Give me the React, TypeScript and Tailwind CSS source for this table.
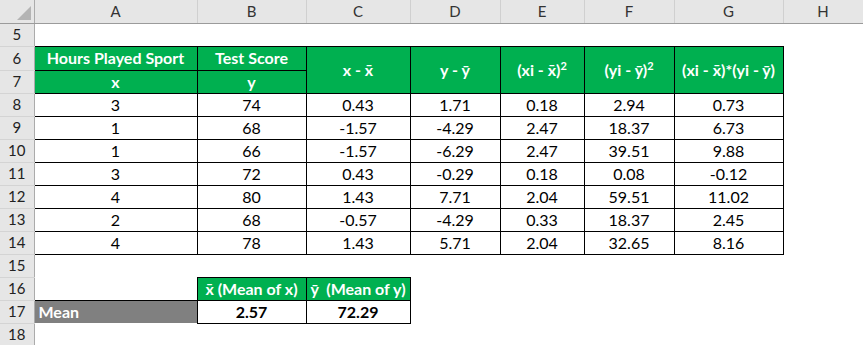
import React from "react";

const F = "font-['Lato','Liberation_Sans',sans-serif]";

const rowHead =
  "bg-[#e6e6e6] border-r border-r-[#ababab] border-b border-b-[#d4d4d4] text-center text-[15px] text-[#222] font-normal p-0";
const colHead =
  "bg-[#e6e6e6] border-b border-b-[#9b9b9b] border-r border-r-[#d0d0d0] text-center text-[15px] text-[#333] font-normal p-0";
const green =
  "bg-[#00b050] border border-black text-white font-bold text-center text-[16px] p-0 whitespace-nowrap";
const data = "border border-black text-center text-[16px] text-black p-0";
const blank = "p-0";

const rows: string[][] = [
  ["3", "74", "0.43", "1.71", "0.18", "2.94", "0.73"],
  ["1", "68", "-1.57", "-4.29", "2.47", "18.37", "6.73"],
  ["1", "66", "-1.57", "-6.29", "2.47", "39.51", "9.88"],
  ["3", "72", "0.43", "-0.29", "0.18", "0.08", "-0.12"],
  ["4", "80", "1.43", "7.71", "2.04", "59.51", "11.02"],
  ["2", "68", "-0.57", "-4.29", "0.33", "18.37", "2.45"],
  ["4", "78", "1.43", "5.71", "2.04", "32.65", "8.16"],
];

function Blanks({ n }: { n: number }) {
  return (
    <>
      {Array.from({ length: n }).map((_, i) => (
        <td key={i} className={blank}></td>
      ))}
    </>
  );
}

export default function App() {
  return (
    <div className={`w-[863px] h-[345px] bg-white overflow-hidden ${F} leading-none`}>
      <table className="border-collapse table-fixed w-[863px]">
        <colgroup>
          <col className="w-[34px]" />
          <col className="w-[163px]" />
          <col className="w-[109px]" />
          <col className="w-[104px]" />
          <col className="w-[90px]" />
          <col className="w-[84px]" />
          <col className="w-[90px]" />
          <col className="w-[109px]" />
          <col className="w-[80px]" />
        </colgroup>
        <tbody>
          <tr className="h-[23px]">
            <th className="bg-[#e6e6e6] border-r border-r-[#ababab] border-b border-b-[#9b9b9b] p-0 relative">
              <svg width="14" height="14" viewBox="0 0 14 14" className="absolute right-[3px] bottom-[3px]">
                <polygon points="14,0 14,14 0,14" fill="#b4b4b4" />
              </svg>
            </th>
            {["A", "B", "C", "D", "E", "F", "G", "H"].map((c) => (
              <th key={c} className={colHead}>
                {c}
              </th>
            ))}
          </tr>
          <tr className="h-[23px]">
            <td className={rowHead}>5</td>
            <Blanks n={8} />
          </tr>
          <tr className="h-[24px]">
            <td className={rowHead}>6</td>
            <td className={green}>Hours Played Sport</td>
            <td className={green}>Test Score</td>
            <td className={green} rowSpan={2}>
              x - x̄
            </td>
            <td className={green} rowSpan={2}>
              y - ȳ
            </td>
            <td className={green} rowSpan={2}>
              (xi - x̄)<sup className="text-[11px]">2</sup>
            </td>
            <td className={green} rowSpan={2}>
              (yi - ȳ)<sup className="text-[11px]">2</sup>
            </td>
            <td className={green} rowSpan={2}>
              (xi - x̄)*(yi - ȳ)
            </td>
            <td className={blank}></td>
          </tr>
          <tr className="h-[23px]">
            <td className={rowHead}>7</td>
            <td className={green}>x</td>
            <td className={green}>y</td>
            <td className={blank}></td>
          </tr>
          {rows.map((r, i) => (
            <tr key={i} className="h-[23px]">
              <td className={rowHead}>{8 + i}</td>
              {r.map((v, j) => (
                <td key={j} className={data}>
                  {v}
                </td>
              ))}
              <td className={blank}></td>
            </tr>
          ))}
          <tr className="h-[23px]">
            <td className={rowHead}>15</td>
            <Blanks n={8} />
          </tr>
          <tr className="h-[23px]">
            <td className={rowHead}>16</td>
            <td className={blank}></td>
            <td className={green}>x̄ (Mean of x)</td>
            <td className={`${green} whitespace-pre`}>ȳ  (Mean of y)</td>
            <Blanks n={5} />
          </tr>
          <tr className="h-[23px]">
            <td className={rowHead}>17</td>
            <td className="bg-[#808080] border-t border-t-black text-white font-bold text-left text-[16px] pl-[4px] p-0">
              Mean
            </td>
            <td className={`${data} font-bold`}>2.57</td>
            <td className={`${data} font-bold`}>72.29</td>
            <Blanks n={5} />
          </tr>
          <tr className="h-[23px]">
            <td className={rowHead}>18</td>
            <Blanks n={8} />
          </tr>
        </tbody>
      </table>
    </div>
  );
}
